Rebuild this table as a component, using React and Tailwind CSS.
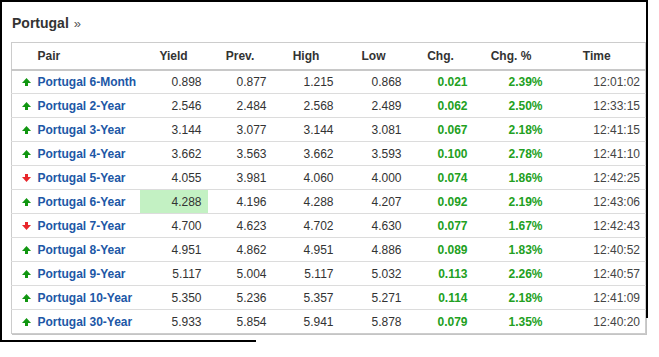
import React from 'react'

const rows = [
  ['Portugal 6-Month', '0.898', '0.877', '1.215', '0.868', '0.021', '2.39%', '12:01:02', 'up'],
  ['Portugal 2-Year', '2.546', '2.484', '2.568', '2.489', '0.062', '2.50%', '12:33:15', 'up'],
  ['Portugal 3-Year', '3.144', '3.077', '3.144', '3.081', '0.067', '2.18%', '12:41:15', 'up'],
  ['Portugal 4-Year', '3.662', '3.563', '3.662', '3.593', '0.100', '2.78%', '12:41:10', 'up'],
  ['Portugal 5-Year', '4.055', '3.981', '4.060', '4.000', '0.074', '1.86%', '12:42:25', 'down'],
  ['Portugal 6-Year', '4.288', '4.196', '4.288', '4.207', '0.092', '2.19%', '12:43:06', 'up', true],
  ['Portugal 7-Year', '4.700', '4.623', '4.702', '4.630', '0.077', '1.67%', '12:42:43', 'down'],
  ['Portugal 8-Year', '4.951', '4.862', '4.951', '4.886', '0.089', '1.83%', '12:40:52', 'up'],
  ['Portugal 9-Year', '5.117', '5.004', '5.117', '5.032', '0.113', '2.26%', '12:40:57', 'up'],
  ['Portugal 10-Year', '5.350', '5.236', '5.357', '5.271', '0.114', '2.18%', '12:41:09', 'up'],
  ['Portugal 30-Year', '5.933', '5.854', '5.941', '5.878', '0.079', '1.35%', '12:40:20', 'up'],
]

function Arrow({ dir }) {
  if (dir === 'down') {
    return (
      <svg width="9" height="8" viewBox="0 0 9 8" className="block">
        <rect x="3" y="0" width="3" height="3.5" fill="#e8262b" />
        <polygon points="0,3 9,3 4.5,8" fill="#e8262b" />
      </svg>
    )
  }
  return (
    <svg width="9" height="8" viewBox="0 0 9 8" className="block">
      <polygon points="4.5,0 9,5 0,5" fill="#119611" />
      <rect x="3" y="4.5" width="3" height="3.5" fill="#119611" />
    </svg>
  )
}

export default function App() {
  return (
    <div className="w-[659px] h-[357px] bg-white overflow-hidden" style={{ fontFamily: '"Liberation Sans", Arial, sans-serif' }}>
      <div className="relative w-[648px] h-[340px] border-t-2 border-l-2 border-black">
        {/* right edge of the frame stops short */}
        <div className="absolute right-0 top-0 w-[2px] h-[316px] bg-black" />
        <div className="pl-[10px] pt-[11px] h-[40px] flex items-baseline">
          <span className="text-[14px] font-bold text-[#333]">Portugal</span>
          <span className="ml-[5px] text-[13px] text-[#555]">»</span>
        </div>
        <table className="ml-[9px] w-[634px] border-collapse border border-[#ccc] shadow-[1px_1px_0_#c4c4c4] text-[12px] table-fixed">
          <colgroup>
            <col className="w-[24px]" />
            <col className="w-[104px]" />
            <col className="w-[68px]" />
            <col className="w-[65px]" />
            <col className="w-[67px]" />
            <col className="w-[68px]" />
            <col className="w-[66px]" />
            <col className="w-[75px]" />
            <col className="w-[97px]" />
          </colgroup>
          <thead>
            <tr className="h-[27px] border-b-2 border-[#c8c8c8] font-bold text-[#333]">
              <th />
              <th className="text-left pl-[2px] font-bold">Pair</th>
              <th className="text-center font-bold">Yield</th>
              <th className="text-center font-bold">Prev.</th>
              <th className="text-center font-bold">High</th>
              <th className="text-center font-bold">Low</th>
              <th className="text-center font-bold">Chg.</th>
              <th className="text-center font-bold">Chg. %</th>
              <th className="text-center font-bold">Time</th>
            </tr>
          </thead>
          <tbody>
            {rows.map((r, i) => (
              <tr key={i} className="h-[24px] border-b border-[#dcdcdc] last:border-b-0">
                <td className="pl-[10px]"><Arrow dir={r[8]} /></td>
                <td className="pl-[2px] font-bold text-[#2057a6] whitespace-nowrap">{r[0]}</td>
                <td className={`text-right pr-[6px] text-[#333] ${r[9] ? 'bg-[#c3f1c3]' : ''}`}>{r[1]}</td>
                <td className="text-right pr-[6px] text-[#333]">{r[2]}</td>
                <td className="text-right pr-[6px] text-[#333]">{r[3]}</td>
                <td className="text-right pr-[6px] text-[#333]">{r[4]}</td>
                <td className="text-right pr-[6px] font-bold text-[#22a022]">{r[5]}</td>
                <td className="text-right pr-[6px] font-bold text-[#22a022]">{r[6]}</td>
                <td className="text-right pr-[5px] text-[#444]">{r[7]}</td>
              </tr>
            ))}
          </tbody>
        </table>
      </div>
      <div className="w-[256px] h-[2px] bg-black" />
    </div>
  )
}
